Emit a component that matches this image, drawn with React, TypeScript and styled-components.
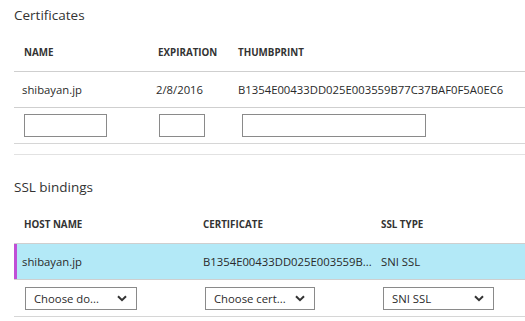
import * as React from 'react';
import styled, { createGlobalStyle } from 'styled-components';

const GlobalStyle = createGlobalStyle`
	html, body {
		margin: 0;
		padding: 0;
		background: #ffffff;
	}
	body {
		font-family: 'Open Sans', 'Liberation Sans', sans-serif;
		color: #222222;
	}
`;

const Page = styled.div`
	width: 525px;
	height: 321px;
	overflow: hidden;
	padding-left: 14px;
	box-sizing: border-box;
`;

const SectionTitle = styled.div<{ top: number }>`
	padding-top: ${p => p.top}px;
	height: 24px;
	font-size: 13.5px;
	line-height: 16px;
	color: #333333;
`;

const Grid = styled.div<{ cols: string }>`
	display: grid;
	grid-template-columns: ${p => p.cols};
	align-items: center;
`;

const HeadRow = styled(Grid)<{ h: number }>`
	height: ${p => p.h}px;
	border-bottom: 1px solid #cfcfcf;
`;

const HeadCell = styled.div<{ pad?: number }>`
	padding-left: ${p => p.pad ?? 10}px;
	padding-top: 2px;
	font-size: 9.8px;
	font-weight: 700;
	color: #333333;
`;

const DataRow = styled(Grid)<{ selected?: boolean }>`
	height: 35px;
	border-bottom: 1px solid #cfcfcf;
	background: ${p => (p.selected ? '#b3e9f7' : 'transparent')};
	box-shadow: ${p => (p.selected ? 'inset 3px 0 0 #c04fd6' : 'none')};
`;

const Cell = styled.div<{ pad?: number }>`
	padding-left: ${p => p.pad ?? 8}px;
	font-size: 11.3px;
	color: #2a2a2a;
	white-space: nowrap;
`;

const InputRow = styled(Grid)<{ h: number }>`
	height: ${p => p.h}px;
	border-bottom: 1px solid #d6d6d6;
`;

const TextBox = styled.div<{ w: number; left: number }>`
	margin-left: ${p => p.left}px;
	width: ${p => p.w}px;
	height: 23px;
	box-sizing: border-box;
	border: 1px solid #8a8a8a;
	background: #ffffff;
`;

const Spacer = styled.div`
	height: 10px;
	border-bottom: 1px solid #e2e2e2;
`;

const Select = styled.div<{ w: number; left: number }>`
	margin-left: ${p => p.left}px;
	width: ${p => p.w}px;
	height: 23px;
	box-sizing: border-box;
	border: 1px solid #8a8a8a;
	display: flex;
	align-items: center;
	justify-content: space-between;
	padding: 0 9px 0 8px;
	font-size: 11.3px;
	color: #2a2a2a;
`;

const Chevron = () => (
	<svg width="10" height="7" viewBox="0 0 10 7">
		<path d="M1 1.2 L5 5.2 L9 1.2" fill="none" stroke="#333" strokeWidth="2" />
	</svg>
);

export default function App() {
	const certCols = '134px 80px 1fr';
	const sslCols = '179px 178px 1fr';
	return (
		<React.Fragment>
			<GlobalStyle />
			<Page>
				<SectionTitle top={7}>Certificates</SectionTitle>
				<HeadRow cols={certCols} h={40}>
					<HeadCell>NAME</HeadCell>
					<HeadCell>EXPIRATION</HeadCell>
					<HeadCell>THUMBPRINT</HeadCell>
				</HeadRow>
				<DataRow cols={certCols}>
					<Cell>shibayan.jp</Cell>
					<Cell>2/8/2016</Cell>
					<Cell pad={10}>B1354E00433DD025E003559B77C37BAF0F5A0EC6</Cell>
				</DataRow>
				<InputRow cols={certCols} h={35}>
					<TextBox left={10} w={83} />
					<TextBox left={11} w={46} />
					<TextBox left={14} w={184} />
				</InputRow>
				<Spacer />
				<SectionTitle top={24}>SSL bindings</SectionTitle>
				<HeadRow cols={sslCols} h={40}>
					<HeadCell>HOST NAME</HeadCell>
					<HeadCell>CERTIFICATE</HeadCell>
					<HeadCell>SSL TYPE</HeadCell>
				</HeadRow>
				<DataRow cols={sslCols} selected>
					<Cell>shibayan.jp</Cell>
					<Cell pad={10}>B1354E00433DD025E003559B...</Cell>
					<Cell pad={10}>SNI SSL</Cell>
				</DataRow>
				<InputRow cols={sslCols} h={36}>
					<Select left={11} w={112}>Choose do... <Chevron /></Select>
					<Select left={12} w={110}>Choose cert... <Chevron /></Select>
					<Select left={12} w={111}>SNI SSL <Chevron /></Select>
				</InputRow>
			</Page>
		</React.Fragment>
	);
}
